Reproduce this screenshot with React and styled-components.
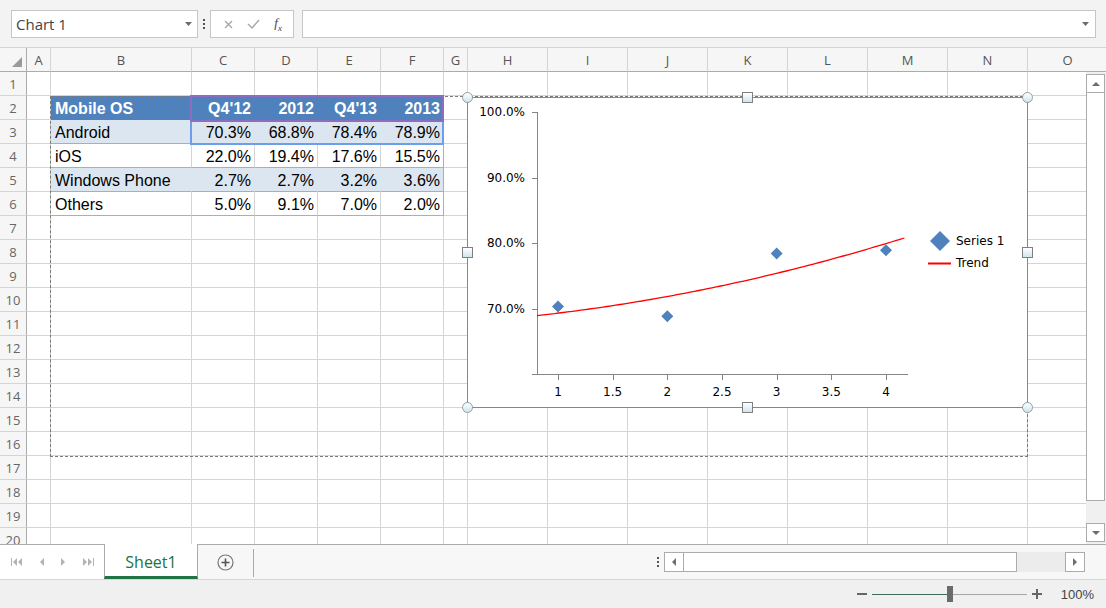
import React from 'react';
import styled, { createGlobalStyle } from 'styled-components';

const GlobalStyle = createGlobalStyle`
  html, body {
    margin: 0;
    padding: 0;
    background: #fff;
    overflow: hidden;
  }
  body {
    font-family: "Liberation Sans", Arial, sans-serif;
  }
  * {
    box-sizing: border-box;
  }
`;

// column widths include the 1px right gridline
const COLS = [
  { name: 'A', w: 24 },
  { name: 'B', w: 141 },
  { name: 'C', w: 63 },
  { name: 'D', w: 63 },
  { name: 'E', w: 63 },
  { name: 'F', w: 63 },
  { name: 'G', w: 24 },
  { name: 'H', w: 80 },
  { name: 'I', w: 80 },
  { name: 'J', w: 80 },
  { name: 'K', w: 80 },
  { name: 'L', w: 80 },
  { name: 'M', w: 80 },
  { name: 'N', w: 80 },
  { name: 'O', w: 80 },
];
const GRID = `27px ${COLS.map((c) => `${c.w}px`).join(' ')}`;

const TABLE = [
  { tone: 'head', cells: ['Mobile OS', "Q4'12", '2012', "Q4'13", '2013'] },
  { tone: 'band', cells: ['Android', '70.3%', '68.8%', '78.4%', '78.9%'] },
  { tone: 'plain', cells: ['iOS', '22.0%', '19.4%', '17.6%', '15.5%'] },
  { tone: 'band', cells: ['Windows Phone', '2.7%', '2.7%', '3.2%', '3.6%'] },
  { tone: 'plain', cells: ['Others', '5.0%', '9.1%', '7.0%', '2.0%'] },
];

const TONES = {
  head: { bg: '#4f81bd', fg: '#fff', line: '#4f81bd', bottom: '#4f81bd' },
  band: { bg: '#dce6f1', fg: '#000', line: '#dce6f1', bottom: '#95b3d7' },
  plain: { bg: '#fff', fg: '#000', line: '#d4d4d4', bottom: '#95b3d7' },
};

const POINTS = [
  [1, 70.3],
  [2, 68.8],
  [3, 78.4],
  [4, 78.9],
];

/* ---------- window ---------- */

const Window = styled.div`
  width: 1106px;
  height: 608px;
  display: flex;
  flex-direction: column;
  overflow: hidden;
  background: #fff;
`;

/* ---------- formula toolbar ---------- */

const Toolbar = styled.div`
  flex: none;
  height: 48px;
  display: flex;
  align-items: flex-start;
  padding: 10px 10px 0 11px;
  background: #f3f3f3;
  border-bottom: 1px solid #d5d5d5;
`;

const NameBox = styled.div`
  width: 187px;
  height: 28px;
  display: flex;
  align-items: center;
  justify-content: space-between;
  padding: 0 5px 0 4px;
  background: #fff;
  border: 1px solid #c6c6c6;
  font-family: "Open Sans", sans-serif;
  font-size: 15px;
  color: #444;
`;

const Grip = styled.div`
  width: 12px;
  height: 28px;
  display: flex;
  flex-direction: column;
  align-items: center;
  justify-content: center;
  gap: 2px;

  span {
    width: 2px;
    height: 2px;
    background: #555;
  }
`;

const FxGroup = styled.div`
  width: 84px;
  height: 28px;
  display: flex;
  align-items: center;
  justify-content: space-around;
  padding: 0 4px 0 6px;
  background: #fff;
  border: 1px solid #c6c6c6;
`;

const FxText = styled.span`
  font-family: "Liberation Serif", serif;
  font-style: italic;
  font-size: 13px;
  color: #444;

  sub {
    font-size: 9px;
  }
`;

const FormulaBox = styled.div`
  flex: 1;
  height: 28px;
  margin-left: 8px;
  display: flex;
  align-items: center;
  justify-content: flex-end;
  padding-right: 6px;
  background: #fff;
  border: 1px solid #c6c6c6;
`;

const Caret = () => (
  <svg width="7" height="4" viewBox="0 0 7 4">
    <path d="M0 0h7L3.5 4z" fill="#6d6d6d" />
  </svg>
);

/* ---------- sheet grid ---------- */

const Sheet = styled.div`
  position: relative;
  flex: none;
  height: 496px;
  overflow: hidden;
`;

const HeadRow = styled.div`
  display: grid;
  grid-template-columns: ${GRID};
  height: 24px;
`;

const Corner = styled.div`
  position: relative;
  background: #f6f6f6;
  border-right: 1px solid #ababab;
  border-bottom: 1px solid #ababab;

  svg {
    position: absolute;
    right: 4px;
    bottom: 4px;
  }
`;

const ColHead = styled.div`
  display: flex;
  align-items: center;
  justify-content: center;
  background: #f6f6f6;
  border-right: 1px solid #d4d4d4;
  border-bottom: 1px solid #ababab;
  font-family: "Open Sans", sans-serif;
  font-size: 13px;
  color: #555;
`;

const Body = styled.div`
  display: flex;
  height: 472px;
`;

const Rows = styled.div`
  flex: 1;
  overflow: hidden;
`;

const Row = styled.div`
  display: grid;
  grid-template-columns: ${GRID};
  height: 24px;
`;

const RowHead = styled.div`
  display: flex;
  align-items: center;
  justify-content: center;
  background: #f6f6f6;
  border-right: 1px solid #ababab;
  border-bottom: 1px solid #d4d4d4;
  font-family: "Open Sans", sans-serif;
  font-size: 13px;
  color: #666;
`;

const Cell = styled.div`
  height: 24px;
  padding: 2px 3px 0 4px;
  line-height: 22px;
  white-space: nowrap;
  overflow: hidden;
  font-size: 16px;
  text-align: ${(p) => p.$align};
  font-weight: ${(p) => (p.$tone === 'head' ? 700 : 400)};
  color: ${(p) => (p.$tone ? TONES[p.$tone].fg : '#000')};
  background: ${(p) => (p.$tone ? TONES[p.$tone].bg : '#fff')};
  border-bottom: 1px solid ${(p) => (p.$tone ? TONES[p.$tone].bottom : '#d4d4d4')};
  border-right: 1px solid
    ${(p) => {
      if (!p.$tone) return '#d4d4d4';
      if (p.$edge && p.$tone !== 'head') return '#95b3d7';
      return TONES[p.$tone].line;
    }};
`;

const VScroll = styled.div`
  width: 20px;
  display: flex;
  flex-direction: column;
  padding: 2px 1px 2px 0;
  background: #f0f0f0;
`;

const ScrollBtn = styled.div`
  flex: none;
  width: ${(p) => p.$w || '19px'};
  height: ${(p) => p.$h || '19px'};
  display: flex;
  align-items: center;
  justify-content: center;
  background: #fff;
  border: 1px solid #ababab;
`;

const Thumb = styled.div`
  flex: none;
  width: ${(p) => p.$w || '19px'};
  height: ${(p) => p.$h || '19px'};
  background: #fff;
  border: 1px solid #ababab;
  border-top: ${(p) => (p.$vertical ? 'none' : '1px solid #ababab')};
  border-left: ${(p) => (p.$vertical ? '1px solid #ababab' : 'none')};
`;

const Fill = styled.div`
  flex: 1;
`;

/* ---------- overlays on the sheet ---------- */

const Marquee = styled.div`
  position: absolute;
  left: 50px;
  top: 48px;
  width: 978px;
  height: 361px;
  border: 1px dashed #7a7a7a;
  pointer-events: none;
`;

const RangeBox = styled.div`
  position: absolute;
  left: 190px;
  top: ${(p) => p.$top}px;
  width: 254px;
  height: ${(p) => p.$h}px;
  border: 2px solid ${(p) => p.$color};
`;

const ChartBox = styled.div`
  position: absolute;
  left: 467px;
  top: 49px;
  width: 561px;
  height: 311px;
  background: #fff;

  > svg {
    display: block;
  }
`;

const Handle = styled.div`
  position: absolute;
  width: 11px;
  height: 11px;
  left: ${(p) => p.$x - 5}px;
  top: ${(p) => p.$y - 5}px;
  border: 1px solid ${(p) => (p.$round ? '#8fa3aa' : '#7f7f7f')};
  border-radius: ${(p) => (p.$round ? '50%' : '0')};
  background: linear-gradient(#ffffff, #cfe6eb);
`;

/* ---------- sheet tabs ---------- */

const TabBar = styled.div`
  flex: none;
  height: 36px;
  display: flex;
  align-items: stretch;
  background: #f7f7f7;
  border-top: 1px solid #ababab;
  border-bottom: 1px solid #d6d6d6;
`;

const NavArea = styled.div`
  width: 104px;
  display: flex;
  align-items: center;
  justify-content: space-around;
  padding: 0 2px;
  background: #fff;
`;

const SheetTab = styled.div`
  width: 94px;
  margin-top: -1px;
  padding-top: 3px;
  display: flex;
  align-items: center;
  justify-content: center;
  background: #fff;
  border-left: 1px solid #ababab;
  border-right: 1px solid #ababab;
  border-bottom: 3px solid #217346;
  font-family: "Open Sans", sans-serif;
  font-size: 16px;
  color: #217346;
`;

const AddSheet = styled.div`
  width: 55px;
  display: flex;
  align-items: center;
  justify-content: center;
`;

const Divider = styled.div`
  width: 1px;
  margin: 4px 0 2px;
  background: #ababab;
`;

const HScrollWrap = styled.div`
  flex: 1;
  display: flex;
  align-items: center;
  justify-content: flex-end;
  padding-right: 21px;
  gap: 5px;
`;

const HScroll = styled.div`
  width: 421px;
  height: 20px;
  display: flex;
  background: #ececec;
`;

const VDots = styled.div`
  display: flex;
  flex-direction: column;
  gap: 2px;

  span {
    width: 2px;
    height: 2px;
    background: #555;
  }
`;

/* ---------- status bar ---------- */

const StatusBar = styled.div`
  flex: 1;
  display: flex;
  align-items: center;
  justify-content: flex-end;
  padding-right: 12px;
  background: #f0f0f0;
  font-size: 13px;
  color: #444;
`;

const Zoom = styled.div`
  display: flex;
  align-items: center;
  gap: 4px;
  margin-right: 18px;
`;

const Slider = styled.div`
  position: relative;
  width: 155px;
  height: 1px;
  background: linear-gradient(to right, #3d6b55 50%, #a6a6a6 50%);

  &::after {
    content: '';
    position: absolute;
    left: 75px;
    top: -8px;
    width: 6px;
    height: 16px;
    background: #6b6b6b;
  }
`;

/* ---------- drawings ---------- */

const Arrow = ({ dir, color = '#6d6d6d' }) => {
  const paths = {
    up: 'M0 4L4 0L8 4z',
    down: 'M0 0h8L4 4z',
    left: 'M4 0v8L0 4z',
    right: 'M0 0l4 4l-4 4z',
  };
  const vertical = dir === 'up' || dir === 'down';
  return (
    <svg width={vertical ? 8 : 4} height={vertical ? 4 : 8} viewBox={vertical ? '0 0 8 4' : '0 0 4 8'}>
      <path d={paths[dir]} fill={color} />
    </svg>
  );
};

const NavIcon = ({ kind }) => {
  const c = '#b3b3b3';
  if (kind === 'first')
    return (
      <svg width="12" height="8" viewBox="0 0 12 8">
        <rect x="0" y="0" width="1" height="8" fill={c} />
        <path d="M6 0v8L2 4zM11 0v8L7 4z" fill={c} />
      </svg>
    );
  if (kind === 'last')
    return (
      <svg width="12" height="8" viewBox="0 0 12 8">
        <path d="M1 0v8l4-4zM6 0v8l4-4z" fill={c} />
        <rect x="11" y="0" width="1" height="8" fill={c} />
      </svg>
    );
  return <Arrow dir={kind} color={c} />;
};

const xPix = (v) => 91 + (v - 1) * 109.33;
const yPix = (p) => 277 - (p - 60) * 6.55;

// polynomial (order 2) trend line over the four points
const trend = (v) => {
  const t = v - 2.5;
  return 74.1 + 3.54 * t + 0.5 * (t * t - 1.25);
};

const diamond = (cx, cy, r) => `M${cx} ${cy - r}L${cx + r} ${cy}L${cx} ${cy + r}L${cx - r} ${cy}Z`;

const Chart = () => {
  const trendPts = [];
  for (let v = 0.808; v <= 4.205; v += 0.04) {
    trendPts.push(`${xPix(v).toFixed(1)},${yPix(trend(v)).toFixed(1)}`);
  }
  const yTicks = [100, 90, 80, 70, 60];
  const xTicks = [1, 1.5, 2, 2.5, 3, 3.5, 4];
  return (
    <svg width="561" height="311" viewBox="0 0 561 311" fontFamily="DejaVu Sans, sans-serif" fontSize="12">
      <rect x="0.5" y="0.5" width="560" height="310" fill="#fff" stroke="#5b8fd0" />
      <g stroke="#868686" strokeWidth="1">
        <line x1="70.5" y1="15" x2="70.5" y2="277.5" />
        <line x1="70" y1="277.5" x2="441" y2="277.5" />
        {yTicks.map((p) => (
          <line key={p} x1="65" y1={Math.round(yPix(p)) + 0.5} x2="70" y2={Math.round(yPix(p)) + 0.5} />
        ))}
        {xTicks.map((v) => (
          <line key={v} x1={Math.round(xPix(v)) + 0.5} y1="277" x2={Math.round(xPix(v)) + 0.5} y2="283" />
        ))}
      </g>
      <g fill="#000">
        {yTicks.slice(0, 4).map((p) => (
          <text key={p} x="58" y={yPix(p) + 4} textAnchor="end">
            {p.toFixed(1)}%
          </text>
        ))}
        {xTicks.map((v) => (
          <text key={v} x={xPix(v)} y="299" textAnchor="middle">
            {v}
          </text>
        ))}
      </g>
      {POINTS.map(([v, p]) => (
        <path key={v} d={diamond(xPix(v), yPix(p), 6)} fill="#4f81bd" />
      ))}
      <polyline points={trendPts.join(' ')} fill="none" stroke="#ff0000" strokeWidth="1.3" />
      <path d={diamond(473, 144, 10)} fill="#4f81bd" />
      <text x="489" y="148">Series 1</text>
      <line x1="461" y1="166.5" x2="484" y2="166.5" stroke="#ff0000" strokeWidth="2" />
      <text x="489" y="170">Trend</text>
    </svg>
  );
};

const HANDLES = [
  { x: 0, y: 0, round: true },
  { x: 280, y: 0 },
  { x: 560, y: 0, round: true },
  { x: 0, y: 155 },
  { x: 560, y: 155 },
  { x: 0, y: 310, round: true },
  { x: 280, y: 310 },
  { x: 560, y: 310, round: true },
];

const renderRow = (r) => {
  const data = r >= 2 && r <= 6 ? TABLE[r - 2] : null;
  return (
    <Row key={r}>
      <RowHead>{r}</RowHead>
      {COLS.map((c, i) => {
        const inTable = data && i >= 1 && i <= 5;
        return (
          <Cell
            key={c.name}
            $tone={inTable ? data.tone : undefined}
            $edge={i === 5}
            $align={i === 1 ? 'left' : 'right'}
          >
            {inTable ? data.cells[i - 1] : ''}
          </Cell>
        );
      })}
    </Row>
  );
};

const App = () => {
  const rows = [];
  for (let r = 1; r <= 20; r += 1) rows.push(renderRow(r));

  return (
    <>
      <GlobalStyle />
      <Window>
        <Toolbar>
          <NameBox>
            <span>Chart 1</span>
            <Caret />
          </NameBox>
          <Grip>
            <span />
            <span />
            <span />
          </Grip>
          <FxGroup>
            <svg width="9" height="9" viewBox="0 0 9 9">
              <path d="M1 1l7 7M8 1l-7 7" stroke="#a6a6a6" strokeWidth="1.3" />
            </svg>
            <svg width="13" height="10" viewBox="0 0 13 10">
              <path d="M1 5l4 4l7-8" stroke="#a6a6a6" strokeWidth="1.4" fill="none" />
            </svg>
            <FxText>
              f<sub>x</sub>
            </FxText>
          </FxGroup>
          <FormulaBox>
            <Caret />
          </FormulaBox>
        </Toolbar>

        <Sheet>
          <HeadRow>
            <Corner>
              <svg width="10" height="10" viewBox="0 0 10 10">
                <path d="M10 0v10H0z" fill="#9a9a9a" />
              </svg>
            </Corner>
            {COLS.map((c) => (
              <ColHead key={c.name}>{c.name}</ColHead>
            ))}
          </HeadRow>
          <Body>
            <Rows>{rows}</Rows>
            <VScroll>
              <ScrollBtn>
                <Arrow dir="up" />
              </ScrollBtn>
              <Thumb $h="408px" $vertical />
              <Fill />
              <ScrollBtn>
                <Arrow dir="down" />
              </ScrollBtn>
            </VScroll>
          </Body>

          <Marquee />
          <RangeBox $top={72} $h={25} $color="#6d9eeb" />
          <RangeBox $top={47} $h={27} $color="#8e6cc0" />
          <ChartBox>
            <Chart />
            {HANDLES.map((h) => (
              <Handle key={`${h.x}-${h.y}`} $x={h.x} $y={h.y} $round={h.round} />
            ))}
          </ChartBox>
        </Sheet>

        <TabBar>
          <NavArea>
            <NavIcon kind="first" />
            <NavIcon kind="left" />
            <NavIcon kind="right" />
            <NavIcon kind="last" />
          </NavArea>
          <SheetTab>Sheet1</SheetTab>
          <AddSheet>
            <svg width="17" height="17" viewBox="0 0 17 17">
              <circle cx="8.5" cy="8.5" r="7.5" fill="none" stroke="#777" strokeWidth="1.2" />
              <path d="M8.5 4.5v8M4.5 8.5h8" stroke="#555" strokeWidth="1.6" />
            </svg>
          </AddSheet>
          <Divider />
          <HScrollWrap>
            <VDots>
              <span />
              <span />
              <span />
            </VDots>
            <HScroll>
              <ScrollBtn $w="20px" $h="20px">
                <Arrow dir="left" />
              </ScrollBtn>
              <Thumb $w="333px" $h="20px" />
              <Fill />
              <ScrollBtn $w="20px" $h="20px">
                <Arrow dir="right" />
              </ScrollBtn>
            </HScroll>
          </HScrollWrap>
        </TabBar>

        <StatusBar>
          <Zoom>
            <svg width="12" height="12" viewBox="0 0 12 12">
              <path d="M1 6h10" stroke="#666" strokeWidth="2" />
            </svg>
            <Slider />
            <svg width="12" height="12" viewBox="0 0 12 12">
              <path d="M1 6h10M6 1v10" stroke="#666" strokeWidth="2" />
            </svg>
          </Zoom>
          <span>100%</span>
        </StatusBar>
      </Window>
    </>
  );
};

export default App;
